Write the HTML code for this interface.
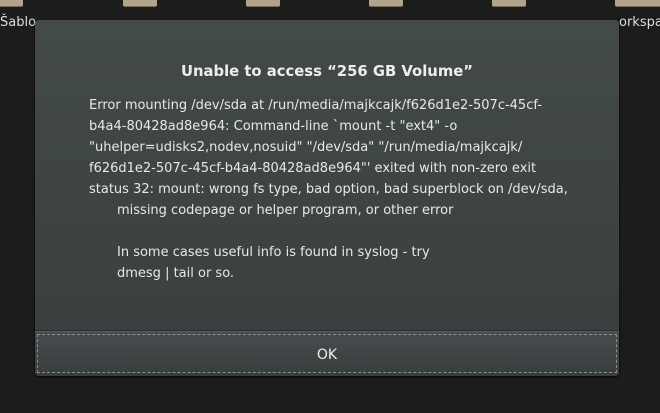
<!DOCTYPE html>
<html><head><meta charset="utf-8"><style>
html,body{margin:0;padding:0;width:660px;height:413px;overflow:hidden;background:#1c1c1c;font-family:"DejaVu Sans","Liberation Sans",sans-serif;}
.fold{position:absolute;top:0;height:6px;background:#b0a48f;border-bottom:1px solid #7a6a50;border-radius:0 0 2px 2px;}
.lbl{position:absolute;top:15px;color:#ddd;font-size:13px;}
.dlg{position:absolute;left:35px;top:20px;width:584px;height:356px;background:linear-gradient(#434a4a,#393e3e);border-radius:4px;box-shadow:0 1px 2px #000;}
.title{position:absolute;top:43px;left:0;width:584px;text-align:center;color:#eee;font-size:14.8px;font-weight:bold;}
.body{position:absolute;left:54px;top:75px;color:#e8e8e8;font-size:13px;line-height:21px;white-space:nowrap;}
.ind{padding-left:28px;}
.sep{position:absolute;left:0;top:310px;width:584px;height:1px;background:#2a2e2e;}
.btn{position:absolute;left:0;top:311px;width:584px;height:45px;background:linear-gradient(#474d4e,#373c3c);border-top:1px solid #555c5c;border-radius:0 0 4px 4px;box-sizing:border-box;}
.focus{position:absolute;left:2px;top:2px;right:2px;bottom:3px;border:1px dashed #8a9090;}
.ok{position:absolute;width:100%;top:15px;text-align:center;color:#eee;font-size:14px;}
</style></head><body>
<div class="fold" style="left:-20px;width:43px"></div>
<div class="fold" style="left:123px;width:34px"></div>
<div class="fold" style="left:246px;width:34px"></div>
<div class="fold" style="left:369px;width:34px"></div>
<div class="fold" style="left:492px;width:34px"></div>
<div class="fold" style="left:615px;width:60px"></div>
<div class="lbl" style="left:0">Šablo</div>
<div class="lbl" style="left:619px">orkspa</div>
<div class="dlg">
<div class="title">Unable to access “256 GB Volume”</div>
<div class="body">Error mounting /dev/sda at /run/media/majkcajk/f626d1e2-507c-45cf-<br>b4a4-80428ad8e964: Command-line `mount -t "ext4" -o<br>"uhelper=udisks2,nodev,nosuid" "/dev/sda" "/run/media/majkcajk/<br>f626d1e2-507c-45cf-b4a4-80428ad8e964"' exited with non-zero exit<br>status 32: mount: wrong fs type, bad option, bad superblock on /dev/sda,<br><span class="ind">missing codepage or helper program, or other error</span><br><br><span class="ind">In some cases useful info is found in syslog - try</span><br><span class="ind">dmesg | tail or so.</span></div>
<div class="sep"></div>
<div class="btn"><div class="focus"></div><div class="ok">OK</div></div>
</div>
</body></html>
